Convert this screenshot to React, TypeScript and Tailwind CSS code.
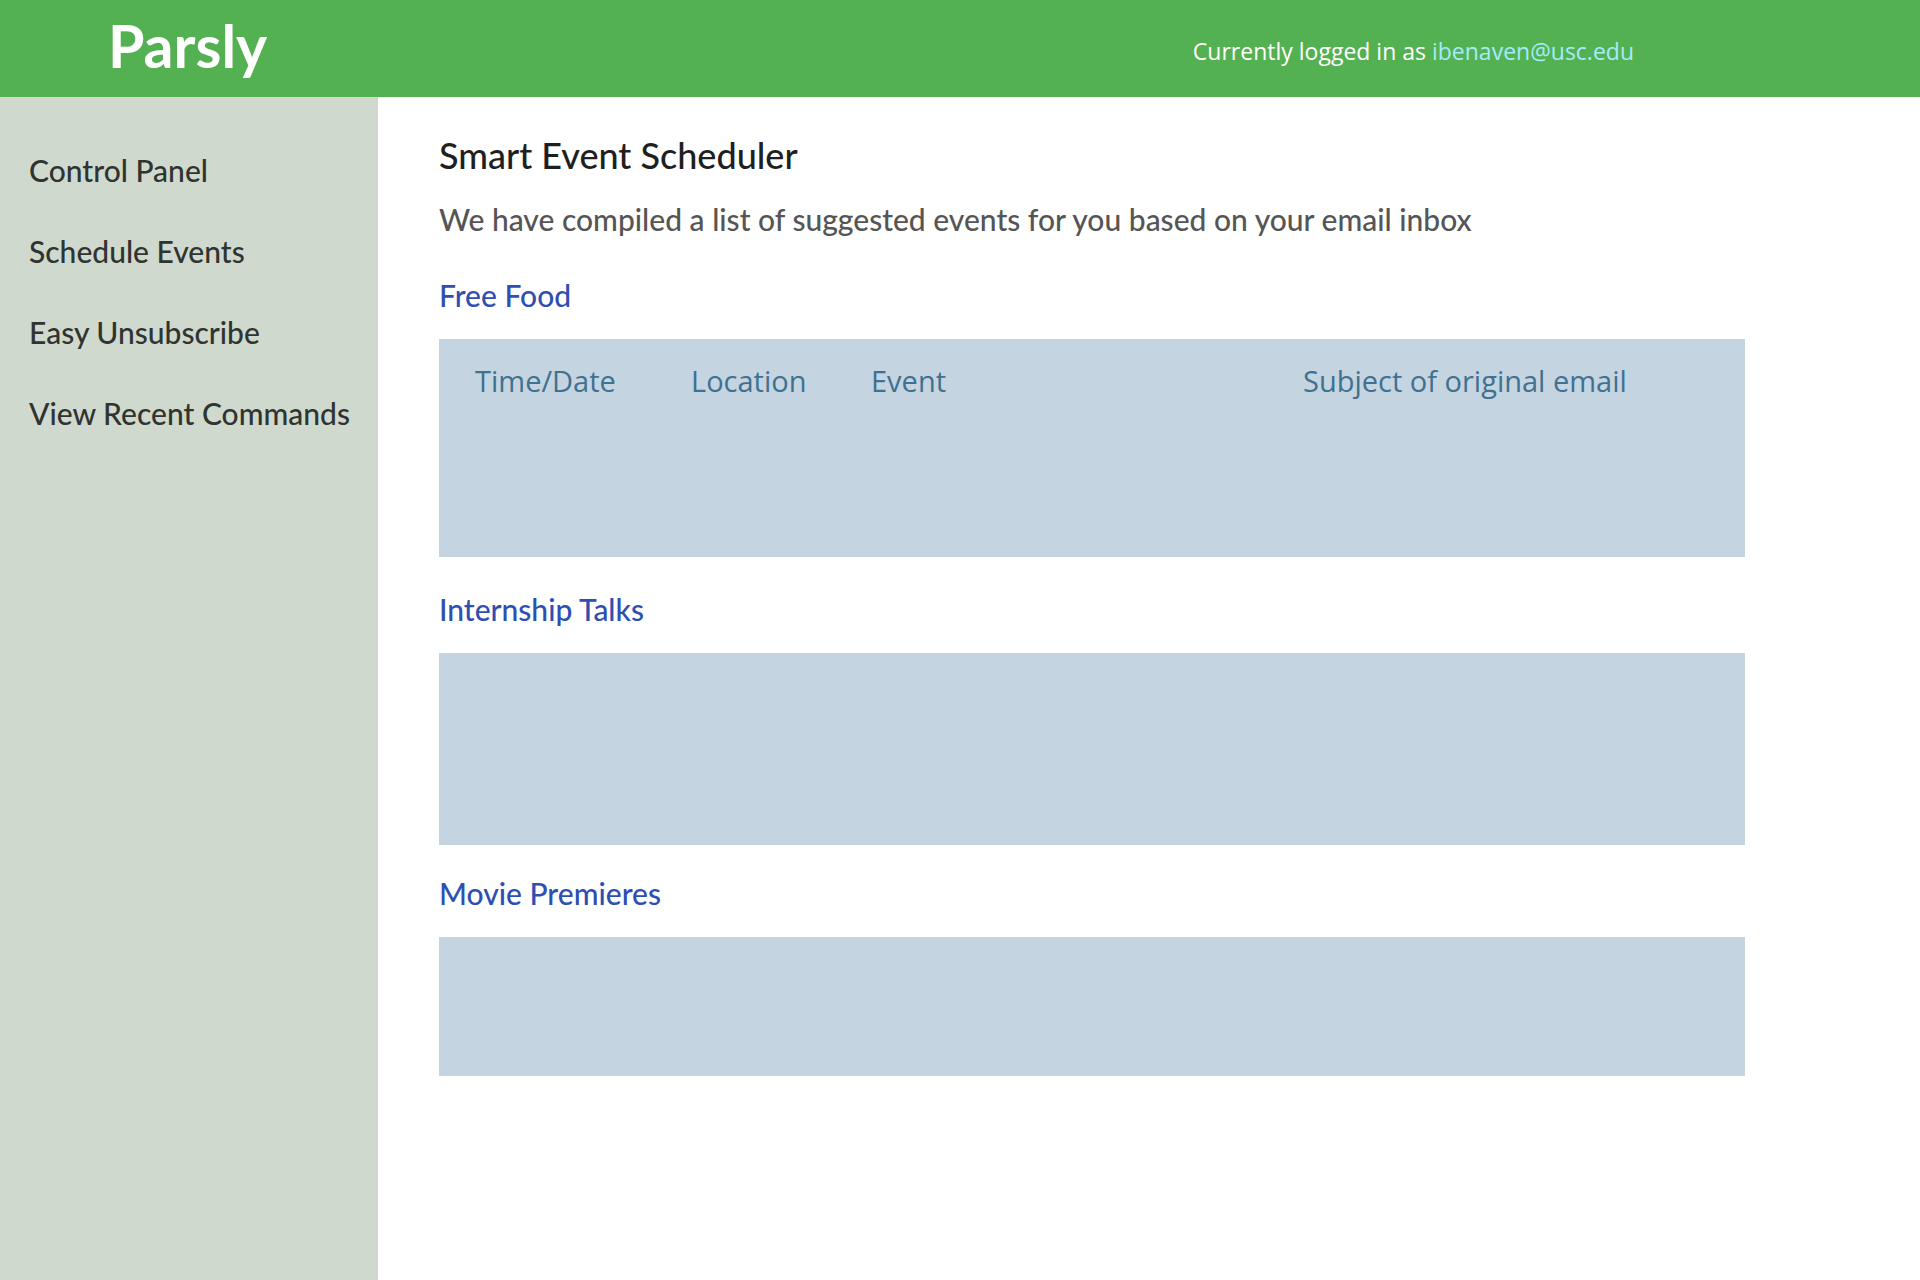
import React from "react";

const navItems = ["Control Panel", "Schedule Events", "Easy Unsubscribe", "View Recent Commands"];

const columns = [
  { label: "Time/Date", width: "w-[216px]" },
  { label: "Location", width: "w-[180px]" },
  { label: "Event", width: "w-[432px]" },
  { label: "Subject of original email", width: "" },
];

function Section({ title, className, children }: { title: string; className: string; children?: React.ReactNode }) {
  return (
    <section>
      <h2 className="text-[30px] leading-9 font-medium text-[#2f4fb0]">{title}</h2>
      <div className={`mt-[26px] bg-[#c5d4e1] ${className}`}>{children}</div>
    </section>
  );
}

export default function App() {
  return (
    <div className="flex min-h-screen flex-col bg-white font-['Lato',sans-serif]">
      <header className="flex h-[97px] items-center justify-between bg-[#54b151] pr-[286px] pl-[108px] text-white">
        <a href="#" className="pb-1.5 text-[59px] leading-[72px] font-bold">Parsly</a>
        <p className="pt-1 font-['Open_Sans',sans-serif] text-[23px] leading-8">
          Currently logged in as <a href="#" className="text-[#a5ebfb]">ibenaven@usc.edu</a>
        </p>
      </header>
      <div className="flex grow">
        <nav className="w-[378px] shrink-0 bg-[#cfd9ce] pt-[55px] pl-[29px]">
          <ul className="flex flex-col gap-[45px] text-[30px] leading-9 font-medium text-[#2f3430]">
            {navItems.map((item) => (
              <li key={item}><a href="#">{item}</a></li>
            ))}
          </ul>
        </nav>
        <main className="min-w-0 grow pt-9 pr-[175px] pl-[61px]">
          <h1 className="text-[36px] leading-[44px] font-medium text-[#1f1f1f]">Smart Event Scheduler</h1>
          <p className="mt-6 text-[30px] leading-9 font-medium text-[#555]">
            We have compiled a list of suggested events for you based on your email inbox
          </p>
          <div className="mt-10 flex flex-col gap-[30px]">
            <Section title="Free Food" className="mb-1 h-[218px] px-9 pt-[22px]">
              <table className="w-full table-fixed font-['Open_Sans',sans-serif] text-[29px] leading-10 text-[#3f7190]">
                <thead>
                  <tr>
                    {columns.map((c) => (
                      <th key={c.label} scope="col" className={`text-left font-normal ${c.width}`}>{c.label}</th>
                    ))}
                  </tr>
                </thead>
              </table>
            </Section>
            <Section title="Internship Talks" className="h-48" />
            <Section title="Movie Premieres" className="h-[139px]" />
          </div>
        </main>
      </div>
    </div>
  );
}
